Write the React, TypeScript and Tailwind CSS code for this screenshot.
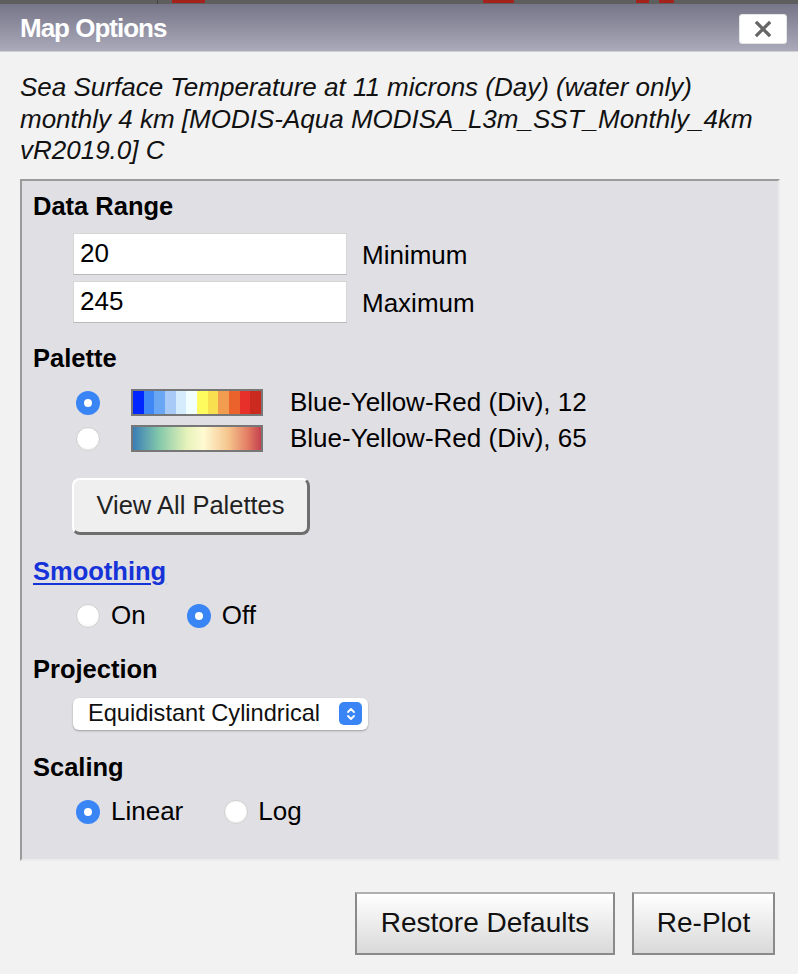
import React from 'react';

const steps = [
  '#0026ff', '#3f87f5', '#69a7f5', '#a7cbf6', '#d5ecfd', '#f2ffff',
  '#fefb5e', '#f8df50', '#f29c4f', '#eb622d', '#e8302a', '#cb2a1e',
];

function Radio({ checked }: { checked?: boolean }) {
  if (checked) {
    return (
      <span className="flex h-6 w-6 shrink-0 items-center justify-center rounded-full bg-[#3a85f6]">
        <span className="h-2 w-2 rounded-full bg-white" />
      </span>
    );
  }
  return (
    <span className="block h-6 w-6 shrink-0 rounded-full border border-[#cfcfcf] bg-white shadow-[inset_0_-1px_2px_rgba(0,0,0,0.08)]" />
  );
}

function Heading({ children, link }: { children: React.ReactNode; link?: boolean }) {
  return (
    <div
      className={
        'h-[30px] text-[25.5px] font-bold leading-[30px] ' +
        (link ? 'text-[#1533d8] underline decoration-2 underline-offset-[3px]' : 'text-black')
      }
    >
      {children}
    </div>
  );
}

export default function App() {
  return (
    <div className="h-[974px] w-[798px] overflow-hidden bg-[#f2f2f2] font-['Liberation_Sans',Arial,sans-serif] text-black">
      {/* map strip peeking above the dialog */}
      <div className="relative h-1 bg-[#5e5e5e]">
        <div className="absolute left-[157px] top-0 h-1 w-px bg-[#444]" />
        <div className="absolute left-[172px] top-0 h-[3px] w-[33px] bg-[#a3221c]" />
        <div className="absolute left-[483px] top-0 h-[3px] w-[31px] bg-[#a3221c]" />
        <div className="absolute left-[636px] top-0 h-[3px] w-[13px] bg-[#a3221c]" />
        <div className="absolute left-[659px] top-0 h-[3px] w-[15px] bg-[#a3221c]" />
      </div>

      {/* title bar */}
      <div className="flex h-12 items-center justify-between border-b border-[#cfcfd4] bg-gradient-to-b from-[#767688] to-[#aaaabb] pl-5 pr-[11px]">
        <span className="mt-[2px] text-[26px] font-bold tracking-[-1px] text-white">Map Options</span>
        <button className="mt-[2px] flex h-[30px] w-12 items-center justify-center rounded-[3px] border border-[#e6e6e6] bg-white">
          <svg width="18" height="18" viewBox="0 0 18 18">
            <path d="M3 3 L15 15 M15 3 L3 15" stroke="#666" strokeWidth="3.2" strokeLinecap="square" />
          </svg>
        </button>
      </div>

      {/* description */}
      <p className="px-5 pt-5 text-[26px] italic leading-[31.5px] text-[#111]">
        Sea Surface Temperature at 11 microns (Day) (water only) monthly 4 km [MODIS-Aqua MODISA_L3m_SST_Monthly_4km vR2019.0] C
      </p>

      {/* options panel */}
      <div className="ml-5 mr-[18px] mt-3 border-2 border-[#9b9b9b] border-b-[#ebebeb] border-r-[#ebebeb] bg-[#e0dfe4] pb-[29px] pl-[11px] pt-[10px]">
        <Heading>Data Range</Heading>
        <div className="ml-10 mt-[12px] flex flex-col gap-[6px]">
          {[
            ['20', 'Minimum'],
            ['245', 'Maximum'],
          ].map(([v, l]) => (
            <div key={l} className="flex items-center gap-[15px]">
              <div className="flex h-[42px] w-[274px] items-center border border-[#d6d6d6] border-b-[#b9b9b9] bg-white pl-[6px] text-[26px]">
                {v}
              </div>
              <span className="mt-[3px] text-[26px]">{l}</span>
            </div>
          ))}
        </div>

        <div className="mt-5">
          <Heading>Palette</Heading>
        </div>
        <div className="ml-[43px] mt-[12px]">
          <div className="flex h-9 items-center">
            <Radio checked />
            <div className="ml-[31px] flex h-[27px] w-[132px] border-2 border-[#777]">
              {steps.map((c) => (
                <div key={c} className="h-full flex-1" style={{ background: c }} />
              ))}
            </div>
            <span className="ml-[27px] text-[26px]">Blue-Yellow-Red (Div), 12</span>
          </div>
          <div className="flex h-9 items-center">
            <Radio />
            <div className="ml-[31px] h-[27px] w-[132px] border-2 border-[#777] bg-[linear-gradient(to_right,#3a7db6,#82c7aa_20%,#e6f2b9_42%,#fffad3_55%,#f5c38b_75%,#e27a63_90%,#c4424d)]" />
            <span className="ml-[27px] text-[26px]">Blue-Yellow-Red (Div), 65</span>
          </div>
        </div>

        <button className="ml-[39px] mt-[21px] h-[57px] w-[238px] rounded-[8px] border-2 border-white border-b-[3px] border-r-[3px] border-b-[#6e6e6e] border-r-[#6e6e6e] bg-[#efefef] text-[25.5px] text-[#222]">
          View All Palettes
        </button>

        <div className="mt-[21px]">
          <Heading link>Smoothing</Heading>
        </div>
        <div className="ml-[43px] mt-[12px] flex h-9 items-center">
          <Radio />
          <span className="ml-[11px] text-[26px]">On</span>
          <span className="ml-[41px]" />
          <Radio checked />
          <span className="ml-[11px] text-[26px]">Off</span>
        </div>

        <div className="mt-[20px]">
          <Heading>Projection</Heading>
        </div>
        <div className="ml-10 mt-[14px] flex h-8 w-[295px] items-center justify-between rounded-[6px] bg-white pl-[15px] pr-[6px] shadow-[0_1px_2px_rgba(0,0,0,0.3)]">
          <span className="text-[23.6px] text-[#111]">Equidistant Cylindrical</span>
          <span className="flex h-[23px] w-[23px] items-center justify-center rounded-[5px] bg-[#3a85f6]">
            <svg width="12" height="16" viewBox="0 0 12 16">
              <path d="M3 6 L6 3 L9 6 M3 10 L6 13 L9 10" stroke="white" strokeWidth="1.8" fill="none" strokeLinecap="round" strokeLinejoin="round" />
            </svg>
          </span>
        </div>

        <div className="mt-[22px]">
          <Heading>Scaling</Heading>
        </div>
        <div className="ml-[43px] mt-[12px] flex h-9 items-center">
          <Radio checked />
          <span className="ml-[11px] text-[26px]">Linear</span>
          <span className="ml-[41px]" />
          <Radio />
          <span className="ml-[10px] text-[26px]">Log</span>
        </div>
      </div>

      {/* footer buttons */}
      <div className="mt-[31px] flex justify-end gap-[17px] pr-[23px]">
        <button className="h-[63px] w-[260px] border-2 border-[#8a8a8a] border-t-[#b0b0b0] bg-gradient-to-b from-white to-[#d9d9d9] text-[28px] text-[#111]">
          Restore Defaults
        </button>
        <button className="h-[63px] w-[143px] border-2 border-[#8a8a8a] border-t-[#b0b0b0] bg-gradient-to-b from-white to-[#d9d9d9] text-[28px] text-[#111]">
          Re-Plot
        </button>
      </div>
    </div>
  );
}
